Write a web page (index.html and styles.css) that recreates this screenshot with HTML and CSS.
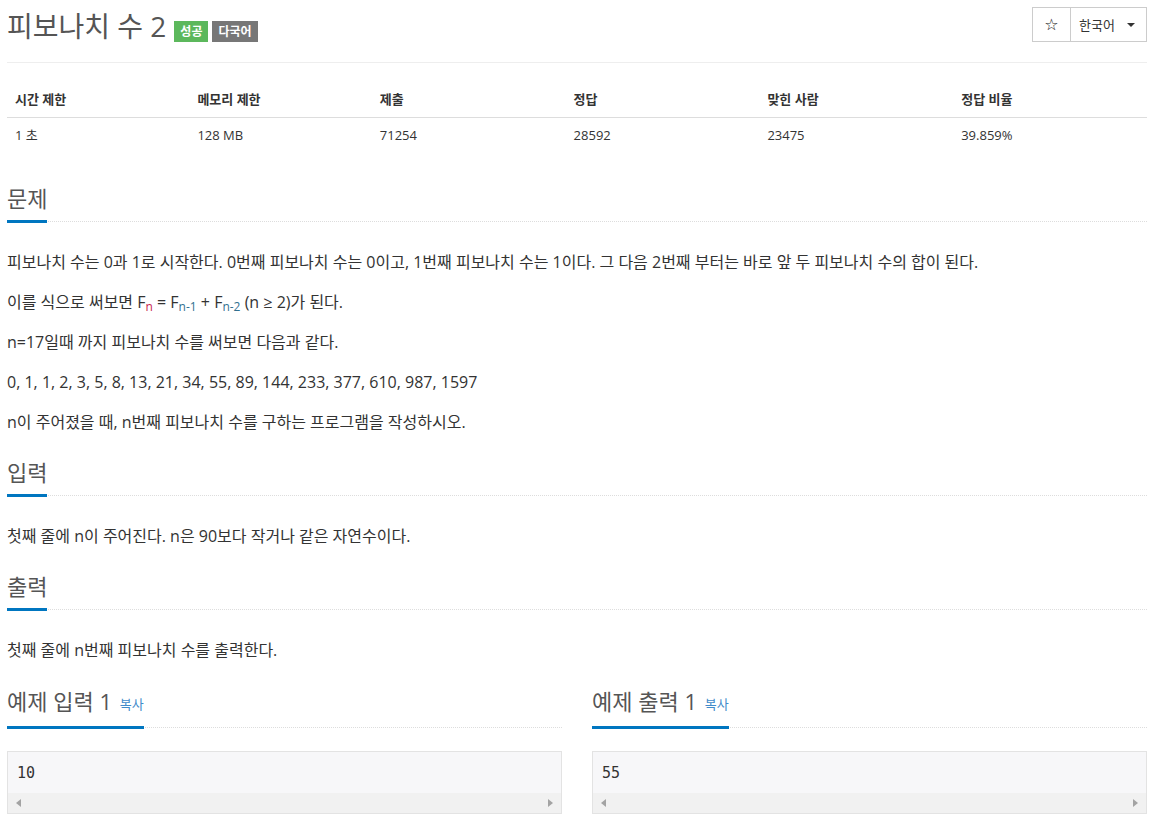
FILE: index.html
```html
<!DOCTYPE html>
<html lang="ko">
<head>
<meta charset="utf-8">
<title>피보나치 수 2</title>
<link rel="stylesheet" href="styles.css">
</head>
<body>
<div class="page">
  <div class="title-row">
    <h1 class="title">피보나치 수 2 <span class="label label-success">성공</span><span class="label label-default">다국어</span></h1>
    <div class="btn-group">
      <button class="btn btn-star">☆</button>
      <button class="btn btn-lang">한국어 <span class="caret"></span></button>
    </div>
  </div>

  <table class="info">
    <thead>
      <tr><th class="c16">시간 제한</th><th class="c16">메모리 제한</th><th class="c17">제출</th><th class="c17">정답</th><th class="c17">맞힌 사람</th><th class="c17">정답 비율</th></tr>
    </thead>
    <tbody>
      <tr><td>1 초</td><td>128 MB</td><td>71254</td><td>28592</td><td>23475</td><td>39.859%</td></tr>
    </tbody>
  </table>

  <section class="section section-first">
    <div class="headline"><h2><span>문제</span></h2></div>
    <p>피보나치 수는 0과 1로 시작한다. 0번째 피보나치 수는 0이고, 1번째 피보나치 수는 1이다. 그 다음 2번째 부터는 바로 앞 두 피보나치 수의 합이 된다.</p>
    <p>이를 식으로 써보면 F<sub class="sub-a">n</sub> = F<sub class="sub-b">n-1</sub> + F<sub class="sub-b">n-2</sub> (n ≥ 2)가 된다.</p>
    <p>n=17일때 까지 피보나치 수를 써보면 다음과 같다.</p>
    <p>0, 1, 1, 2, 3, 5, 8, 13, 21, 34, 55, 89, 144, 233, 377, 610, 987, 1597</p>
    <p>n이 주어졌을 때, n번째 피보나치 수를 구하는 프로그램을 작성하시오.</p>
  </section>

  <section class="section">
    <div class="headline"><h2><span>입력</span></h2></div>
    <p>첫째 줄에 n이 주어진다. n은 90보다 작거나 같은 자연수이다.</p>
  </section>

  <section class="section">
    <div class="headline"><h2><span>출력</span></h2></div>
    <p>첫째 줄에 n번째 피보나치 수를 출력한다.</p>
  </section>

  <div class="examples">
    <section class="example">
      <div class="headline"><h2><span>예제 입력 1 <a class="copy">복사</a></span></h2></div>
      <div class="sample">
        <pre>10</pre>
        <div class="fake-scroll"><span class="arr arr-left"></span><span class="arr arr-right"></span></div>
      </div>
    </section>
    <section class="example">
      <div class="headline"><h2><span>예제 출력 1 <a class="copy">복사</a></span></h2></div>
      <div class="sample">
        <pre>55</pre>
        <div class="fake-scroll"><span class="arr arr-left"></span><span class="arr arr-right"></span></div>
      </div>
    </section>
  </div>
</div>
</body>
</html>
```

FILE: styles.css
```css
* { box-sizing: border-box; }

html, body {
  margin: 0;
  background: #fff;
}

body {
  font-family: "Open Sans", "Noto Sans CJK KR", sans-serif;
  color: #333;
  font-size: 14px;
}

.page {
  padding: 7px 10px 0 7px;
}

.title-row {
  display: flex;
  justify-content: space-between;
  align-items: flex-start;
  height: 56px;
  border-bottom: 1px solid #eee;
}

.title {
  margin: 0;
  padding-top: 3px;
  font-size: 28px;
  font-weight: 400;
  line-height: 33px;
  color: #555;
  display: flex;
  align-items: center;
}

.label {
  display: inline-block;
  font-size: 12px;
  font-weight: 700;
  color: #fff;
  line-height: 21px;
  height: 21px;
  padding: 0 6px;
  margin-top: 10px;
}

.label-success {
  background: #5cb85c;
  margin-left: 8px;
}

.label-default {
  background: #777;
  margin-left: 4px;
}

.btn-group {
  display: flex;
}

.btn {
  font-family: "Open Sans", "Noto Sans CJK KR", sans-serif;
  background: #fff;
  border: 1px solid #ccc;
  height: 35px;
  font-size: 13px;
  color: #333;
  padding: 0 12px;
  display: flex;
  align-items: center;
}

.btn-star {
  width: 39px;
  justify-content: center;
  font-size: 16px;
  padding: 0;
  color: #222;
  font-family: "DejaVu Sans", sans-serif;
}

.btn-lang {
  border-left: none;
  width: 76px;
  padding: 0 0 0 8px;
}

.caret {
  display: inline-block;
  width: 0;
  height: 0;
  margin-left: 12px;
  border-top: 4px solid #333;
  border-left: 4px solid transparent;
  border-right: 4px solid transparent;
}

.info {
  width: 100%;
  margin-top: 19px;
  border-collapse: collapse;
  table-layout: fixed;
  font-size: 13px;
}

.info th, .info td {
  text-align: left;
  padding: 8px;
  line-height: 19px;
}

.info th {
  font-weight: 700;
  border-bottom: 1px solid #ddd;
}

.info .c16 { width: 16%; }
.info .c17 { width: 17%; }

.section {
  margin-top: 23px;
}

.section-first {
  margin-top: 30px;
}

.headline {
  border-bottom: 1px dotted #ddd;
  margin-bottom: 28px;
}

.headline h2 {
  margin: 0 0 -2px;
  font-size: 22px;
  font-weight: 400;
  line-height: 31px;
  color: #555;
}

.headline h2 span {
  display: inline-block;
  border-bottom: 3px solid #0076c0;
  padding-bottom: 6px;
}

.section p {
  margin: 0 0 16px;
  font-size: 16px;
  line-height: 24px;
  color: #333;
}

sub {
  font-size: 12px;
  line-height: 0;
  vertical-align: -3px;
}

.sub-a { color: #c7254e; }
.sub-b { color: #31708f; }

.examples {
  display: grid;
  grid-template-columns: 1fr 1fr;
  column-gap: 30px;
  margin-top: 24px;
}

.example .headline {
  margin-bottom: 23px;
}

.copy {
  font-size: 13px;
  color: #428bca;
  margin-left: 2px;
  vertical-align: 1px;
}

.sample {
  border: 1px solid #e3e3e3;
  background: #f7f7f9;
}

.sample pre {
  margin: 0;
  padding: 9px 9px 7px;
  font-family: "DejaVu Sans Mono", monospace;
  font-size: 15px;
  line-height: 25px;
  color: #333;
}

.fake-scroll {
  height: 20px;
  background: #f1f1f1;
  display: flex;
  justify-content: space-between;
  align-items: center;
  padding: 0 8px 0 8px;
}

.arr {
  width: 0;
  height: 0;
  border-top: 4px solid transparent;
  border-bottom: 4px solid transparent;
}

.arr-left { border-right: 5px solid #a3a3a3; }
.arr-right { border-left: 5px solid #a3a3a3; }
```
